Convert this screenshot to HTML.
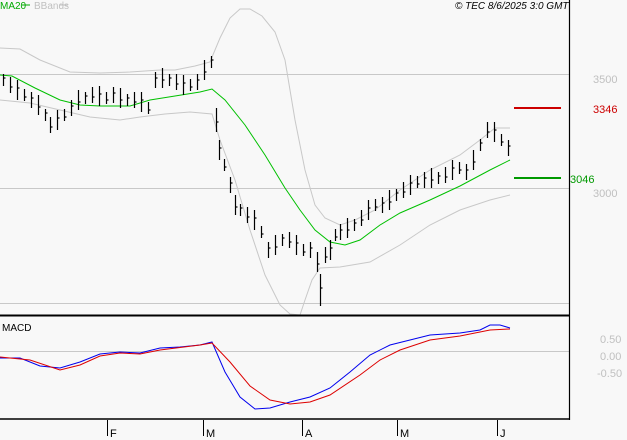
<!DOCTYPE html>
<html><head><meta charset="utf-8"><style>
html,body{margin:0;padding:0;background:#f8f8f8;width:627px;height:440px;overflow:hidden}
svg{display:block}
text{font-family:"Liberation Sans",sans-serif;font-size:11px}
</style></head><body>
<svg id="s" width="627" height="440" viewBox="0 0 627 440">
<rect width="627" height="440" fill="#f8f8f8"/>
<g stroke="#c8c8c8" stroke-width="1">
<line x1="0" y1="74.5" x2="569" y2="74.5"/>
<line x1="0" y1="188.5" x2="569" y2="188.5"/>
<line x1="0" y1="303.5" x2="569" y2="303.5"/>
<line x1="0" y1="351.5" x2="569" y2="351.5"/>
</g>
<polyline fill="none" stroke="#c8c8c8" points="0,48 20,49 40,60 70,72 100,73 130,72 160,70 175,70 195,66 210,62 220,38 230,18 240,9 250,9 262,16 275,32 285,60 295,120 305,170 315,205 325,218 340,225 355,220 375,210 400,190 430,170 460,155 480,140 495,128 510,128"/>
<polyline fill="none" stroke="#c8c8c8" points="0,100 30,103 60,110 90,117 120,120 140,117 165,114 190,112 212,114 220,140 235,180 250,230 265,275 280,305 290,314 300,315 305,300 312,280 320,268 340,267 370,262 400,245 430,225 460,210 490,200 510,195"/>
<polyline fill="none" stroke="#00c000" points="0,75 12,76 35,88 60,100 80,105 100,106 130,106 150,100 175,96 200,92 212,89 225,100 245,125 265,155 285,188 300,210 315,230 330,242 345,245 360,240 380,225 400,213 430,200 460,186 490,170 510,160"/>
<g id="bars" stroke="#000" stroke-width="1.2"></g>
<line x1="0" y1="315.5" x2="569" y2="315.5" stroke="#000" stroke-width="2"/>
<line x1="569.5" y1="0" x2="569.5" y2="420" stroke="#000" stroke-width="1.2"/>
<line x1="0" y1="419" x2="570" y2="419" stroke="#000" stroke-width="1.5"/>
<polyline fill="none" stroke="#0000ee" points="0,358 20,358 40,366 60,368 80,362 100,354 120,352 140,353 160,348 180,347 200,345 212,342 225,372 240,397 255,409 270,408 290,402 310,397 330,388 350,372 370,355 390,345 410,340 430,335 460,333 480,330 490,325 500,325 510,328"/>
<polyline fill="none" stroke="#dd0000" points="0,357 30,360 60,370 80,365 100,356 120,353 140,354 160,350 200,345 212,343 230,362 250,386 270,400 290,404 310,402 330,395 360,375 380,360 400,350 430,340 460,336 490,330 510,329"/>
<g stroke="#000"><line x1="107.5" y1="420" x2="107.5" y2="436"/><line x1="203.5" y1="420" x2="203.5" y2="436"/><line x1="302.5" y1="420" x2="302.5" y2="436"/><line x1="397.5" y1="420" x2="397.5" y2="436"/><line x1="497.5" y1="420" x2="497.5" y2="436"/></g>
<g fill="#000"><text x="110" y="437">F</text><text x="206" y="437">M</text><text x="305" y="437">A</text><text x="400" y="437">M</text><text x="500" y="437">J</text></g>
<line x1="514" y1="108" x2="561" y2="108" stroke="#cc0000" stroke-width="2"/>
<line x1="514" y1="178" x2="561" y2="178" stroke="#009900" stroke-width="2"/>
<text x="593" y="113" fill="#cc0000">3346</text>
<text x="570" y="183" fill="#009900">3046</text>
<g fill="#c0c0c0"><text x="593" y="83">3500</text><text x="593" y="197">3000</text><text x="600" y="343">0.50</text><text x="600" y="360">0.00</text><text x="597" y="377">-0.50</text></g>
<text x="0" y="9" fill="#00aa00" style="font-size:10px">MA20</text><line x1="22" y1="5" x2="30" y2="5" stroke="#00aa00"/>
<text x="34" y="9" fill="#c0c0c0" style="font-size:10px">BBands</text><line x1="60" y1="5" x2="68" y2="5" stroke="#c0c0c0"/>
<text x="455" y="9" fill="#000" style="font-size:10px;font-style:italic">© TEC 8/6/2025 3:0 GMT</text>
<text x="2" y="331" fill="#000" style="font-size:10px">MACD</text>
</svg>
<script>
var p=[[3,80],[10,85],[17,90],[24,95],[31,100],[38,105],[45,115],[50,125],[57,120],[64,115],[71,108],[78,100],[85,98],[92,95],[99,96],[106,98],[113,95],[120,98],[127,100],[134,100],[141,102],[148,108],[155,80],[162,78],[169,80],[176,82],[183,85],[190,85],[197,82],[204,70],[211,62],[216,120],[219,150],[224,165],[230,185],[235,205],[240,210],[247,215],[254,220],[261,232],[268,250],[275,245],[282,240],[289,240],[296,245],[303,250],[310,250],[317,262],[320,290],[325,255],[330,250],[335,235],[340,232],[347,228],[354,225],[361,218],[368,210],[375,205],[382,205],[389,200],[396,195],[403,190],[410,185],[417,182],[424,180],[431,178],[438,178],[445,175],[452,170],[459,168],[466,172],[473,160],[480,145],[487,130],[494,132],[501,140],[508,148]];
var g=document.getElementById('bars'),h='';
p.forEach(function(q,i){var x=q[0]+.5,y=q[1],r=6+(i%3)*2;if(q[0]==320)r=16;if(q[0]==216)r=12;
h+='<line x1="'+x+'" y1="'+(y-r)+'" x2="'+x+'" y2="'+(y+r)+'"/><line x1="'+x+'" y1="'+(y+(i%2?2:-2))+'" x2="'+(x+2)+'" y2="'+(y+(i%2?2:-2))+'"/>';});
g.innerHTML=h;
</script>
</body></html>
